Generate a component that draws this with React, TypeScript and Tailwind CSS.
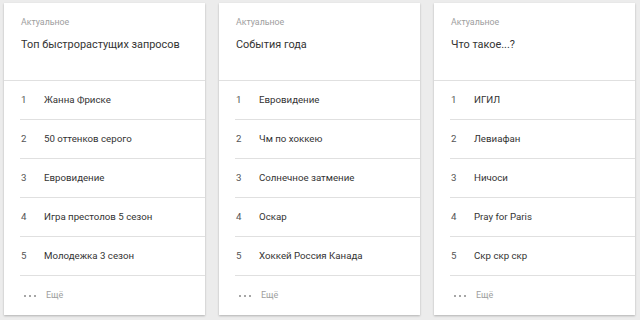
import React from "react";

const cards = [
  {
    title: "Топ быстрорастущих запросов",
    items: ["Жанна Фриске", "50 оттенков серого", "Евровидение", "Игра престолов 5 сезон", "Молодежка 3 сезон"],
  },
  {
    title: "События года",
    items: ["Евровидение", "Чм по хоккею", "Солнечное затмение", "Оскар", "Хоккей Россия Канада"],
  },
  {
    title: "Что такое...?",
    items: ["ИГИЛ", "Левиафан", "Ничоси", "Pray for Paris", "Скр скр скр"],
  },
];

function Card({ title, items }: { title: string; items: string[] }) {
  return (
    <div className="w-[201px] h-[312px] bg-white shadow-[0_1px_2px_rgba(0,0,0,0.25)] flex flex-col">
      <div className="h-[78px] border-b border-[#e0e0e0] pl-[17px] pt-[13px]">
        <div className="text-[8.8px] leading-[12px] text-[#9e9e9e]">Актуальное</div>
        <div className="mt-[8px] text-[10.9px] leading-[18px] text-[#333] whitespace-nowrap">{title}</div>
      </div>
      {items.map((it, i) => (
        <div key={i} className="ml-[16px] h-[39px] border-b border-[#e0e0e0] flex items-center text-[9.7px] text-[#333]">
          <span className="w-[24px] pl-[1px] text-[#555]">{i + 1}</span>
          <span>{it}</span>
        </div>
      ))}
      <div className="flex-1 flex items-center pl-[19px] text-[9px] text-[#9e9e9e]">
        <span className="w-[23px] flex gap-[3px] pl-[1px]">
          <span className="w-[2px] h-[2px] rounded-full bg-[#888]" />
          <span className="w-[2px] h-[2px] rounded-full bg-[#888]" />
          <span className="w-[2px] h-[2px] rounded-full bg-[#888]" />
        </span>
        <span>Ещё</span>
      </div>
    </div>
  );
}

export default function App() {
  return (
    <div className="w-[640px] h-[320px] bg-[#ececec] pt-[3px] pl-[4px] flex gap-[14px] font-['Roboto',sans-serif]">
      {cards.map((c, i) => (
        <Card key={i} {...c} />
      ))}
    </div>
  );
}
